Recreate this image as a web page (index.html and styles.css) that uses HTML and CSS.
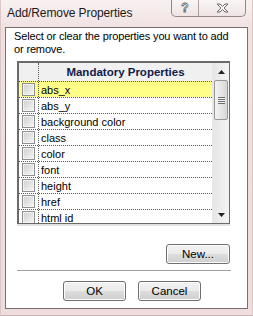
FILE: index.html
```html
<!DOCTYPE html>
<html lang="en">
<head>
    <meta charset="UTF-8">
    <title>Add/Remove Properties</title>
    <link rel="stylesheet" href="styles.css">
</head>
<body>
    <div class="window">
        <div class="titlebar">
            <span class="title">Add/Remove Properties</span>
            <div class="caption">
                <span class="cap cap-help">?</span>
                <span class="cap cap-close">
                    <svg width="13" height="10" viewBox="-1 -1 13 10">
                        <path d="M0 0H3L5.5 2.5L8 0H11L7 4L11 8H8L5.5 5.5L3 8H0L4 4Z" fill="#fff" stroke="#666" stroke-width="1" stroke-linejoin="round"/>
                    </svg>
                </span>
            </div>
        </div>

        <div class="client">
            <p class="intro">Select or clear the properties you want to add or remove.</p>

            <!-- Property list -->
            <div class="listbox">
                <div class="grid">
                    <div class="head">
                        <span class="chk-col"></span>
                        <span class="name-col">Mandatory Properties</span>
                    </div>
                    <div class="row selected"><span class="chk-col"><i class="box"></i></span><span class="name-col">abs_x</span></div>
                    <div class="row"><span class="chk-col"><i class="box"></i></span><span class="name-col">abs_y</span></div>
                    <div class="row"><span class="chk-col"><i class="box"></i></span><span class="name-col">background color</span></div>
                    <div class="row"><span class="chk-col"><i class="box"></i></span><span class="name-col">class</span></div>
                    <div class="row"><span class="chk-col"><i class="box"></i></span><span class="name-col">color</span></div>
                    <div class="row"><span class="chk-col"><i class="box"></i></span><span class="name-col">font</span></div>
                    <div class="row"><span class="chk-col"><i class="box"></i></span><span class="name-col">height</span></div>
                    <div class="row"><span class="chk-col"><i class="box"></i></span><span class="name-col">href</span></div>
                    <div class="row"><span class="chk-col"><i class="box"></i></span><span class="name-col">html id</span></div>
                </div>
                <div class="scrollbar">
                    <div class="arrow">
                        <svg width="7" height="4" viewBox="0 0 7 4"><path d="M3.5 0L7 4H0Z" fill="#222"/></svg>
                    </div>
                    <div class="thumb"><span class="grip"></span></div>
                    <div class="track"></div>
                    <div class="arrow">
                        <svg width="7" height="4" viewBox="0 0 7 4"><path d="M0 0H7L3.5 4Z" fill="#222"/></svg>
                    </div>
                </div>
            </div>

            <div class="new-row">
                <button class="btn btn-new">New...</button>
            </div>

            <div class="sep"></div>

            <div class="footer">
                <button class="btn">OK</button>
                <button class="btn">Cancel</button>
            </div>
        </div>
    </div>
</body>
</html>
```

FILE: styles.css
```css
/* General styles */
* {
    margin: 0;
    padding: 0;
    box-sizing: border-box;
}

body {
    width: 253px;
    height: 316px;
    overflow: hidden;
    font-family: "Liberation Sans", Arial, sans-serif;
    background: #efdede;
}

/* Window frame */
.window {
    height: 316px;
    padding: 0 5px 6px;
    background: linear-gradient(#f8f1f1, #f0e0e0 30px, #efdcdc);
    border-bottom: 1px solid #c9b2b2;
    border-left: 1px solid #dcc6c6;
    border-right: 1px solid #dcc6c6;
    display: flex;
    flex-direction: column;
}

.titlebar {
    height: 27px;
    display: flex;
    justify-content: space-between;
    align-items: flex-start;
    margin-left: -1px;
}

.title {
    padding: 6px 0 0 2px;
    font-size: 12px;
    line-height: 14px;
    color: #1a1a1a;
    letter-spacing: -0.1px;
}

.caption {
    display: flex;
    height: 17px;
    margin-right: 1px;
    border: 1px solid #978686;
    border-top: none;
    border-radius: 0 0 5px 5px;
    background: linear-gradient(#faf5f5, #efe4e4);
}

.cap {
    display: flex;
    justify-content: center;
    align-items: center;
}

.cap-help {
    width: 27px;
    border-right: 1px solid #b09f9f;
    font-size: 12px;
    font-weight: bold;
    color: #fff;
    -webkit-text-stroke: 0.8px #666;
}

.cap-close {
    width: 46px;
}

/* Client area */
.client {
    flex: 1;
    margin-left: -1px;
    margin-right: -1px;
    background: #fff;
    border: 1px solid #7b7070;
    display: flex;
    flex-direction: column;
}

.intro {
    padding: 2px 0 0 8px;
    width: 232px;
    font-size: 11px;
    line-height: 13px;
    letter-spacing: -0.15px;
    color: #000;
}

/* List box */
.listbox {
    display: flex;
    height: 163px;
    margin: 5px 17px 0 11px;
    border-top: 2px solid #6a6a6a;
    border-left: 2px solid #6a6a6a;
    border-right: 1px solid #6a6a6a;
    border-bottom: 1px solid #6a6a6a;
    box-shadow: 0 2px 0 #e2e2e2;
    overflow: hidden;
}

.grid {
    flex: 1;
    overflow: hidden;
}

.head,
.row {
    display: flex;
    font-size: 11px;
}

.head {
    height: 18px;
    background: #f0f0f0;
    font-weight: bold;
    font-size: 11.5px;
    color: #10204a;
}

.row {
    height: 16px;
    border-top: 1px dotted #555;
    color: #000;
}

.row.selected {
    background: #ffff88;
}

.chk-col {
    width: 20px;
    flex-shrink: 0;
    border-right: 1px dotted #555;
    display: flex;
    align-items: center;
    padding-left: 3px;
}

.name-col {
    flex: 1;
    display: flex;
    align-items: center;
    padding-left: 2px;
    white-space: nowrap;
}

.head .name-col {
    justify-content: center;
    padding-left: 0;
}

.box {
    width: 13px;
    height: 13px;
    border: 1px solid #8e8f8f;
    background: linear-gradient(135deg, #cfcfcf, #f6f6f6);
    box-shadow: inset 0 0 0 1px #f4f4f4;
}

/* Scrollbar */
.scrollbar {
    width: 17px;
    display: flex;
    flex-direction: column;
    background: linear-gradient(90deg, #e6e6e6, #f4f4f4);
    border-left: 1px solid #e8e8e8;
}

.arrow {
    height: 17px;
    display: flex;
    justify-content: center;
    align-items: center;
}

.thumb {
    height: 40px;
    margin: 0 1px;
    border: 1px solid #979797;
    border-radius: 2px;
    background: linear-gradient(90deg, #f3f3f3, #e6e6e6 50%, #d6d6d6);
    display: flex;
    justify-content: center;
    align-items: center;
}

.grip {
    width: 7px;
    height: 7px;
    background: repeating-linear-gradient(#6d6d6d 0 1px, #f4f4f4 1px 2px);
}

.track {
    flex: 1;
}

/* Buttons */
.new-row {
    display: flex;
    justify-content: flex-end;
    margin: 20px 17px 0 0;
}

.btn {
    width: 63px;
    height: 20px;
    font-family: "Liberation Sans", Arial, sans-serif;
    font-size: 11.5px;
    color: #000;
    border: 1px solid #707070;
    border-radius: 3px;
    background: linear-gradient(#f2f2f2, #ebebeb 50%, #dddddd 50%, #cfcfcf);
    box-shadow: inset 0 0 0 1px #fcfcfc;
}

.btn-new {
    width: 64px;
}

.sep {
    height: 1px;
    margin: 6px 16px 0 11px;
    background: #a0a0a0;
}

.footer {
    display: flex;
    gap: 12px;
    justify-content: flex-end;
    margin: 10px 46px 0 0;
}
```
